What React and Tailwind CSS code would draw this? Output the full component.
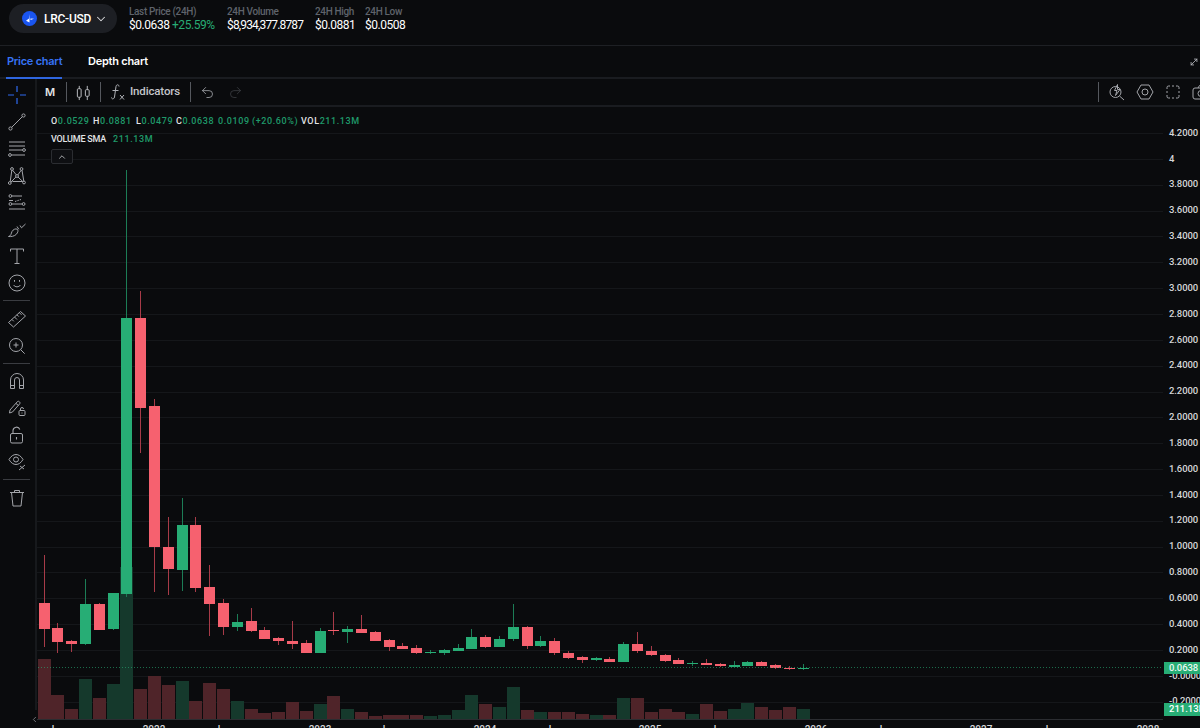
import { ChevronDown, ChevronUp, ChevronLeft, Undo2, Redo2, MoveDiagonal } from "lucide-react";

// x comes from the index, [top of wick, top of body, bottom of body, bottom of wick, green?, top of volume bar]
const candles = [
    [555, 603, 629, 647, 0, 659], [623, 628, 642, 653, 0, 695], [640, 641, 644, 652, 0, 709], [579, 604, 644, 645, 1, 679],
    [603, 604, 630, 630, 0, 698], [593, 593, 629, 630, 1, 684], [170, 318, 594, 597, 1, 567], [291, 318, 408, 453, 0, 689],
    [399, 406, 547, 592, 0, 676], [517, 547, 569, 595, 0, 685], [498, 525, 570, 591, 1, 681], [517, 525, 588, 592, 0, 701],
    [565, 587, 604, 636, 0, 683], [599, 603, 627, 635, 0, 689], [614, 622, 627, 631, 1, 701], [608, 621, 631, 632, 0, 709],
    [627, 630, 639, 639, 0, 713], [637, 638, 641, 645, 0, 712], [621, 641, 644, 649, 0, 702], [640, 643, 653, 653, 0, 711],
    [628, 631, 653, 653, 1, 704], [612, 630, 631, 635, 0, 696], [626, 629, 632, 643, 1, 709], [615, 629, 633, 633, 0, 712],
    [631, 632, 641, 641, 0, 716], [639, 640, 647, 651, 0, 715], [643, 646, 649, 649, 0, 715], [645, 648, 653, 654, 0, 715],
    [650, 652, 653, 654, 1, 716], [649, 650, 653, 655, 1, 715], [644, 648, 651, 651, 1, 710], [629, 637, 649, 649, 1, 695],
    [635, 637, 647, 648, 0, 704], [636, 639, 647, 647, 1, 707], [604, 627, 639, 641, 1, 687], [626, 627, 646, 649, 0, 710],
    [636, 641, 646, 647, 1, 712], [638, 641, 653, 655, 0, 712], [651, 653, 658, 659, 0, 712], [656, 657, 660, 663, 0, 714],
    [657, 658, 660, 661, 1, 715], [657, 659, 662, 662, 0, 715], [642, 644, 662, 662, 1, 698], [632, 644, 651, 653, 0, 698],
    [646, 651, 655, 656, 0, 712], [654, 655, 661, 662, 0, 709], [658, 660, 664, 664, 0, 712], [661, 663, 664, 666, 1, 714],
    [659, 663, 665, 665, 0, 704], [663, 664, 666, 667, 0, 711], [661, 665, 667, 667, 1, 709], [661, 662, 666, 666, 1, 703],
    [661, 662, 666, 666, 0, 707], [664, 665, 668, 669, 0, 710], [666, 668, 669, 670, 0, 707], [664, 668, 669, 670, 1, 709],
];

const prices = ["4.2000", "4", "3.8000", "3.6000", "3.4000", "3.2000", "3.0000", "2.8000", "2.6000", "2.4000", "2.2000", "2.0000", "1.8000", "1.6000", "1.4000", "1.2000", "1.0000", "0.8000", "0.6000", "0.4000", "0.2000", "-0.0000", "-0.2000"];

const timeLabels = [[53, "l"], [154, "2022"], [219, "l"], [320, "2023"], [384, "l"], [485, "2024"], [550, "l"], [650, "2025"], [715, "l"], [816, "2026"], [881, "l"], [981, "2027"], [1047, "l"], [1148, "2028"]];

function Icon({ children, size = 18, className = "text-[#a3a5aa]" }) {
    return (
        <svg width={size} height={size} viewBox="0 0 18 18" fill="none" stroke="currentColor" strokeWidth="1" className={className}>
            {children}
        </svg>
    );
}

const leftIcons = [
    [
        <Icon key="cross" size={18} className="text-[#2f6bf0]"><path d="M9 0v6M9 12v6M0 9h6M12 9h6" strokeWidth="1.2" /></Icon>,
        <Icon key="line"><circle cx="2.5" cy="15.5" r="1.6" /><circle cx="15.5" cy="2.5" r="1.6" /><path d="M3.7 14.3 14.3 3.7" /></Icon>,
        <Icon key="lines"><path d="M1 2h16M1 6h16M1 10h13.5M3.5 15h13.5" /><circle cx="16" cy="10" r="1.4" /><circle cx="2" cy="15" r="1.4" /></Icon>,
        <Icon key="xabcd"><circle cx="4" cy="2" r="1.4" /><circle cx="13.5" cy="2" r="1.4" /><circle cx="1.8" cy="16" r="1.4" /><circle cx="16" cy="15.5" r="1.4" /><circle cx="9" cy="9" r="1.4" /><path d="M2.2 14.7 3.8 3.4M4.6 3.2l3.6 4.6M9.9 7.9l3.2-4.5M14 3.3l1.8 10.8M2.9 15.2l5-5.200M10 10l4.900 4.700M4.500 14.500h10" /></Icon>,
        <Icon key="fib"><circle cx="2.400" cy="2" r="1.400" /><circle cx="2.400" cy="10" r="1.400" /><circle cx="15.600" cy="10" r="1.400" /><path d="M4 2h10M4 10h10M1 15h16M1 6.500h4" /><path d="M7 7.500l6-2" strokeDasharray="1.500 1" /></Icon>,
        <Icon key="brush"><path d="M0.500 16.500c2.500-.3 2.600-3 3.500-5 1-2 3.800-3.300 5.300-2.200 1.200 1 .7 3.200-1 5-1.800 2-5.300 2.500-7.800 2.200Z" /><path d="m9 6.500 1.800 2.800M12 5.500l1.500 2.300L17.500 4" /></Icon>,
        <Icon key="text"><path d="M2.500 4.500V2h13v2.500M9 2v14.500M6.500 16.500h5" /></Icon>,
        <Icon key="smile" size={18}><circle cx="9" cy="9" r="8" /><path d="M5.500 11c1.800 2.400 5.200 2.400 7 0M6.500 6v1.800M11.500 6v1.800" /></Icon>,
    ],
    [
        <Icon key="ruler"><path d="m0.500 12.500 12-11 5 4.500-12 11ZM4 9.500l1.800 1.800M6.500 7l2.500 2.500M9 4.800l1.800 1.800M11.500 2.800l2 2" /></Icon>,
        <Icon key="zoom"><circle cx="8" cy="8" r="6.500" /><path d="M8 5.500v5M5.500 8h5M12.700 12.700l4 4" /></Icon>,
    ],
    [
        <Icon key="magnet"><path d="M2.500 16.500V8a6.500 6.500 0 0 1 13 0v8.500h-4V8a2.500 2.500 0 0 0-5 0v8.500ZM2.500 13.500h4M11.500 13.500h4" /></Icon>,
        <Icon key="pencil"><path d="m2 11 7.500-8.500c1-1 3.300 1 2.300 2.200L4.500 13 1.500 14ZM8 4.500l2.500 2" /><rect x="11" y="11.500" width="6" height="5" rx="1" /><path d="M12.500 11.500V10a1.500 1.500 0 0 1 3 0M14 13.500v1" /></Icon>,
        <Icon key="lock"><rect x="2.500" y="7.500" width="12" height="9.500" rx="1.500" /><path d="M5 7.500V4.500a3.500 3.500 0 0 1 6.800-1M8.500 11v2.500" strokeWidth="1.100" /></Icon>,
        <Icon key="eye"><path d="M1 6.500C3 3 5.500 1.500 8 1.500s5 1.500 7 5c-2 3.500-4.500 5-7 5s-5-1.500-7-5Z" /><circle cx="8" cy="6.500" r="2.500" /><path d="m11 17 6-5M12 13l4 3" /></Icon>,
    ],
    [
        <Icon key="trash"><path d="M2 3.500h14M6.500 3.500V1.500h5v2M3.500 3.500l1.500 13.500h8l1.500-13.500" /></Icon>,
    ],
];

function VDivider() {
    return <div className="w-px h-[20px] bg-[#55585e]" />;
}

function Stat({ label, tracking, children }) {
    return (
        <div className="flex flex-col whitespace-nowrap">
            <span className="text-[10px] leading-[14px] font-medium text-[#5f636b] tracking-[-0.35px]">{label}</span>
            <span className={"text-[12px] leading-[13px] text-white " + tracking}>{children}</span>
        </div>
    );
}

function Chart() {
    return (
        <svg width="1126" height="621" viewBox="37 107 1126 621" className="block shrink-0">
            {prices.map((p, i) => {
                const y = Math.round(133 + i * 25.85) + 0.5;
                return <line key={p} x1="37" x2="1163" y1={y} y2={y} stroke="#15171a" />;
            })}
            {candles.map((c, i) => {
                const x = Math.round(43.5 + i * 13.8);
                return (
                    <rect key={"v" + i} x={x - 6} y={c[5]} width="13" height={719 - c[5]} fill={c[4] ? "#15392c" : "#4f2429"} />
                );
            })}
            {candles.map((c, i) => {
                const x = Math.round(43.5 + i * 13.8);
                const body = c[4] ? "#27ad75" : "#f6616f";
                const wick = c[4] ? "#1c7d56" : "#a83b48";
                return (
                    <g key={"c" + i}>
                        <line x1={x + 0.5} x2={x + 0.5} y1={c[0]} y2={c[3]} stroke={wick} />
                        <rect x={x - 5} y={c[1]} width="11" height={Math.max(c[2] - c[1], 1)} fill={body} />
                    </g>
                );
            })}
            <line x1="38" x2="1163" y1="667.5" y2="667.5" stroke="#27ad75" strokeOpacity="0.6" strokeDasharray="1 2" />
            <line x1="37" x2="1163" y1="719.5" y2="719.5" stroke="#2b2d31" />
            {timeLabels.map(([x, t]) => (
                <text key={x} x={x} y="733" textAnchor="middle" fontSize="10" fontWeight="500" fill="#d5d6d8">{t}</text>
            ))}
        </svg>
    );
}

export default function App() {
    return (
        <div className="relative w-[1200px] h-[728px] overflow-hidden bg-[#0a0b0d] text-white font-['Roboto',sans-serif]">
            {/* market header */}
            <div className="flex items-start h-[46px] pl-[9px] pt-[4px] border-b border-[#1e2024]">
                <div className="flex items-center w-[108px] h-[29px] rounded-full bg-[#1d1f24] pl-[13px] whitespace-nowrap">
                    <svg width="15" height="15" viewBox="0 0 15 15" className="shrink-0">
                        <circle cx="7.500" cy="7.500" r="7.500" fill="#1a55f0" />
                        <path d="M7.500 3 7 7.500 4 9.800 7.500 11.500ZM8.500 7.500l3.500.3-3.500 1.200Z" fill="#fff" />
                    </svg>
                    <span className="ml-[7px] text-[12px] font-medium leading-none tracking-[-0.25px]">LRC-USD</span>
                    <ChevronDown size={14} strokeWidth={1.8} className="ml-[3px] shrink-0 text-[#d8d9db]" />
                </div>
                <div className="flex ml-[12px] pt-[1px]">
                    <div className="w-[98px]">
                        <Stat label="Last Price (24H)" tracking="tracking-[-0.45px]">$0.0638 <span className="text-[#27ad75]">+25.59%</span></Stat>
                    </div>
                    <div className="w-[88px]">
                        <Stat label="24H Volume" tracking="tracking-[-0.85px]">$8,934,377.8787</Stat>
                    </div>
                    <div className="w-[50px]">
                        <Stat label="24H High" tracking="tracking-[-0.5px]">$0.0881</Stat>
                    </div>
                    <Stat label="24H Low" tracking="tracking-[-0.5px]">$0.0508</Stat>
                </div>
            </div>

            {/* tabs */}
            <div className="flex items-stretch h-[33px] pl-[6px] pr-[1px] border-b-2 border-[#1a1c20] font-['Inter',sans-serif] whitespace-nowrap tracking-[-0.25px]">
                <div className="flex items-center w-[56px] -mb-[2px] border-b-2 border-[#2f66e0] text-[11px] font-semibold text-[#3773f5] pl-[1px]">Price chart</div>
                <div className="flex items-center ml-[26px] text-[11px] font-semibold text-white">Depth chart</div>
                <MoveDiagonal size={10} className="ml-auto self-center text-[#b9bbc0]" />
            </div>

            <div className="flex h-[649px]">
                {/* drawing tools */}
                <div className="flex flex-col items-center shrink-0 w-[37px] h-[631px] pt-[3px] pr-[2px] border-r-2 border-[#17191c]">
                    {leftIcons.map((group, g) => (
                        <div key={g} className="flex flex-col items-center w-[27px]">
                            {g > 0 && <div className="w-[27px] h-px mt-[4px] mb-[4px] bg-[#3a3c41]" />}
                            {group.map((icon) => (
                                <div key={icon.key} className="flex items-center justify-center h-[26.8px]">{icon}</div>
                            ))}
                        </div>
                    ))}
                </div>

                <div className="flex flex-col flex-1 min-w-0">
                    {/* chart toolbar */}
                    <div className="flex items-center shrink-0 h-[28px] pl-[8px] border-b-2 border-[#1a1c20] whitespace-nowrap">
                        <span className="w-[21px] text-[11px] font-semibold text-[#e4e5e7] font-['Inter',sans-serif]">M</span>
                        <VDivider />
                        <div className="flex justify-center w-[33px]">
                            <Icon size={17} className="text-[#c2c4c8]"><rect x="2.500" y="5" width="4" height="9" rx="1" /><path d="M4.500 2v3M4.500 14v3M13 2v4M13 13v4" /><rect x="11" y="6" width="4" height="7" rx="1" /></Icon>
                        </div>
                        <VDivider />
                        <Icon size={18} className="ml-[8px] text-[#b1b3b8]"><path d="M10 3.500C10 1.500 7.500 1 7 3.500L5.500 14c-.4 2.500-3 2.300-3 .5M3.500 7.500h6M11 12l4 4.500M15 12l-4 4.500" /></Icon>
                        <span className="ml-[3px] text-[11.5px] font-medium text-[#c4c6ca] tracking-[-0.15px]">Indicators</span>
                        <div className="ml-[10px]"><VDivider /></div>
                        <Undo2 size={15} strokeWidth={1.3} className="ml-[9px] text-[#a5a7ac]" />
                        <Redo2 size={15} strokeWidth={1.3} className="ml-[13px] text-[#3b3d42]" />
                        <div className="flex items-center gap-[9px] ml-auto -mr-[10px]">
                            <VDivider />
                            <div className="flex items-center gap-[10px]">
                                <Icon><circle cx="7.500" cy="9" r="5.500" /><path d="m11.500 13 4.500 4" /><path d="M9.500 1.500 6.500 7.500H9L7.500 12.500 12 6.500H9.500Z" fill="#0a0b0d" /></Icon>
                                <Icon><path d="M5 2h8l4 7-4 7H5L1 9Z" /><circle cx="9" cy="9" r="3" /></Icon>
                                <Icon><path d="M6 3H4.500A1.500 1.500 0 0 0 3 4.500V6M12 3h1.500A1.500 1.500 0 0 1 15 4.500V6M6 15H4.500A1.500 1.500 0 0 1 3 13.500V12M12 15h1.500a1.500 1.500 0 0 0 1.500-1.500V12M3 8v2M15 8v2M8 3h2M8 15h2" /></Icon>
                                <Icon><rect x="1" y="5" width="16" height="11" rx="2" /><path d="M6 5l1.500-2.500h3L12 5" /><circle cx="9" cy="10.500" r="3" /></Icon>
                            </div>
                        </div>
                    </div>
                    <div className="flex">
                        <Chart />
                        {/* price scale */}
                        <div className="flex flex-col w-[37px] pt-[13px] pl-[6px] text-[9.5px] font-medium text-[#d5d6d8] tracking-[-0.1px]">
                            {prices.map((p) => (
                                <div key={p} className="flex items-center shrink-0 h-[25.85px] whitespace-nowrap">{p}</div>
                            ))}
                        </div>
                    </div>
                </div>
            </div>

            {/* legend over the chart */}
            <div className="absolute left-[51px] top-[115px] text-[9px] font-medium tracking-[0.6px] text-[#1f9a6a] whitespace-nowrap">
                <div className="flex h-[13px] leading-[13px]">
                    <div className="w-[42px]"><span className="text-[#e4e5e7]">O</span>0.0529</div>
                    <div className="w-[43px]"><span className="text-[#e4e5e7]">H</span>0.0881</div>
                    <div className="w-[40px]"><span className="text-[#e4e5e7]">L</span>0.0479</div>
                    <div className="w-[42px]"><span className="text-[#e4e5e7]">C</span>0.0638</div>
                    <div className="w-[34px]">0.0109</div>
                    <div className="w-[49px]">(+20.60%)</div>
                    <div><span className="text-[#e4e5e7]">VOL</span>211.13M</div>
                </div>
                <div className="flex h-[13px] leading-[13px] mt-[5px]">
                    <span className="w-[62px] text-[#e4e5e7] tracking-[-0.2px]">VOLUME SMA</span>211.13M
                </div>
                <div className="flex items-center justify-center w-[22px] h-[15px] mt-[3px] rounded-[2px] border border-[#2b2d31] bg-[#0e0f12]">
                    <ChevronUp size={10} className="text-[#c4c6ca]" />
                </div>
            </div>

            <ChevronLeft size={9} className="absolute left-[30px] top-[715px] text-[#8d8f94]" />

            <div className="absolute left-[1164px] top-[662px] flex items-center w-[36px] h-[12px] pl-[5px] bg-[#27ad75] text-[9.5px] font-medium text-[#eafaf3] tracking-[-0.1px]">0.0638</div>
            <div className="absolute left-[1164px] top-[703px] flex items-center w-[36px] h-[13px] pl-[5px] bg-[#27ad75] text-[9.5px] font-medium text-white whitespace-nowrap overflow-hidden">211.13M</div>
        </div>
    );
}
